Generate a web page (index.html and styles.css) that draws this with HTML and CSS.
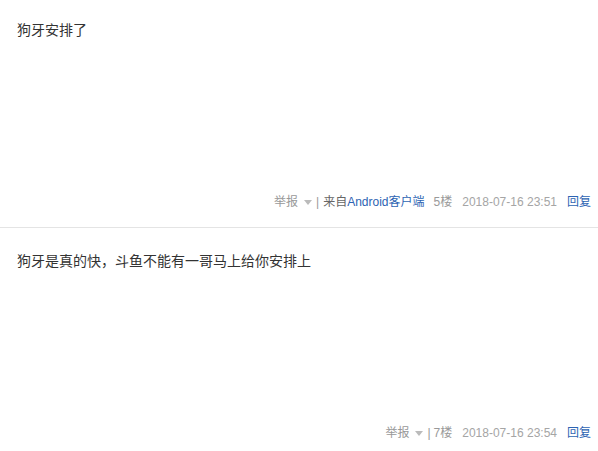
FILE: index.html
```html
<!DOCTYPE html>
<html lang="zh-CN">
<head>
<meta charset="utf-8">
<link rel="stylesheet" href="styles.css">
</head>
<body>
<div class="post post-first">
  <div class="content">狗牙安排了</div>
  <div class="tail">
    <span class="report">举报<span class="arrow"></span></span>
    <span class="pipe">|</span>
    <span class="from">来自<a class="link">Android客户端</a></span>
    <span class="floor">5楼</span>
    <span class="date">2018-07-16 23:51</span>
    <a class="reply">回复</a>
  </div>
</div>
<div class="post">
  <div class="content">狗牙是真的快，斗鱼不能有一哥马上给你安排上</div>
  <div class="tail">
    <span class="report">举报<span class="arrow"></span></span>
    <span class="pipe">|</span>
    <span class="floor floor-near">7楼</span>
    <span class="date">2018-07-16 23:54</span>
    <a class="reply">回复</a>
  </div>
</div>
</body>
</html>
```
FILE: styles.css
```css
html, body {
  margin: 0;
  padding: 0;
  background: #fff;
}
body {
  font-family: "Liberation Sans", "Noto Sans CJK SC", sans-serif;
  width: 598px;
  overflow: hidden;
}
.post {
  padding-top: 25px;
  padding-bottom: 17px;
  border-bottom: 1px solid #e4e4e4;
}
.post-first {
  padding-top: 22px;
}
.content {
  padding-left: 17px;
  font-size: 14px;
  line-height: 16px;
  color: #333;
  min-height: 172px;
}
.tail {
  display: flex;
  justify-content: flex-end;
  align-items: center;
  padding-right: 7px;
  font-size: 12px;
  line-height: 16px;
  color: #999;
  white-space: nowrap;
}
.report {
  display: flex;
  align-items: center;
  color: #999;
}
.arrow {
  display: inline-block;
  width: 0;
  height: 0;
  margin-left: 6px;
  border-left: 4px solid transparent;
  border-right: 4px solid transparent;
  border-top: 5px solid #bbb;
  margin-top: 1px;
}
.pipe {
  margin-left: 4px;
  color: #999;
}
.from {
  margin-left: 4px;
  color: #666;
}
.link, .reply {
  color: #2d64b3;
  text-decoration: none;
}
.floor {
  margin-left: 9px;
  color: #999;
}
.floor-near {
  margin-left: 3px;
}
.date {
  margin-left: 10px;
  color: #a5a5a5;
}
.reply {
  margin-left: 10px;
}
```
